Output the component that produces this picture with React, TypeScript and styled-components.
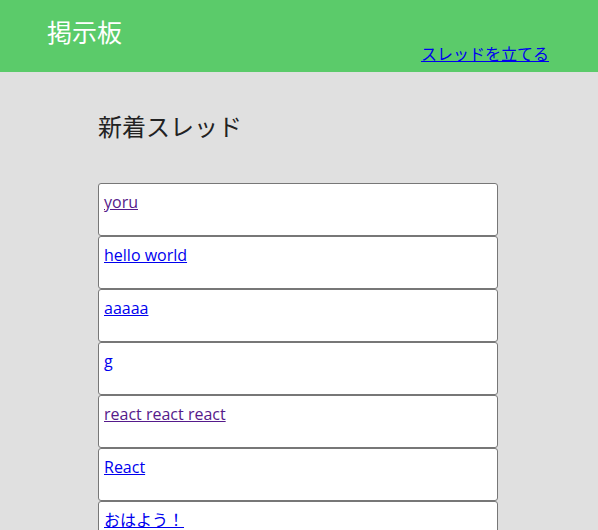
import React from 'react';
import styled, { createGlobalStyle } from 'styled-components';

const GlobalStyle = createGlobalStyle`
  html, body {
    margin: 0;
    padding: 0;
    background-color: #e0e0e0;
    font-family: "Open Sans", "Noto Sans CJK JP", sans-serif;
  }
  a { color: #0000ee; }
  a.visited { color: #551a8b; }
`;

const threads = [
  { id: 1, title: 'yoru', visited: true },
  { id: 2, title: 'hello world', visited: false },
  { id: 3, title: 'aaaaa', visited: false },
  { id: 4, title: 'g', visited: false },
  { id: 5, title: 'react react react', visited: true },
  { id: 6, title: 'React', visited: false },
  { id: 7, title: 'おはよう！', visited: false },
  { id: 8, title: 'test', visited: false },
];

const App = () => {
  return (
    <>
      <GlobalStyle />
      <Header>
        <SiteTitle>掲示板</SiteTitle>
        <NewThreadLink href="#new">スレッドを立てる</NewThreadLink>
      </Header>
      <Main>
        <Heading>新着スレッド</Heading>
        <ThreadList>
          {threads.map((t) => (
            <ThreadItem key={t.id}>
              <ThreadLink href={`#thread-${t.id}`} className={t.visited ? 'visited' : undefined}>
                {t.title}
              </ThreadLink>
            </ThreadItem>
          ))}
        </ThreadList>
      </Main>
    </>
  );
};

export default App;

const Header = styled.header`
  height: 72px;
  box-sizing: border-box;
  padding: 0 49px 0 47px;
  background-color: #5bcb6a;
  display: flex;
  justify-content: space-between;
  align-items: flex-start;
`;

const SiteTitle = styled.h1`
  margin: 0;
  padding-top: 14px;
  font-size: 25px;
  font-weight: normal;
  line-height: 36px;
  color: #ffffff;
`;

const NewThreadLink = styled.a`
  align-self: flex-end;
  margin-bottom: 6px;
  font-size: 16px;
  line-height: 23px;
`;

const Main = styled.main`
  width: 400px;
  margin: 0 auto;
  padding: 37px 2px 0 0;
`;

const Heading = styled.h2`
  margin: 0 0 39px;
  font-size: 24px;
  font-weight: normal;
  line-height: 35px;
  color: #222222;
`;

const ThreadList = styled.ul`
  list-style: none;
  margin: 0;
  padding: 0;
`;

const ThreadItem = styled.li`
  box-sizing: border-box;
  height: 53px;
  padding: 7px 5px 0;
  background-color: #ffffff;
  border: 1px solid #777777;
  border-radius: 3px;
`;

const ThreadLink = styled.a`
  font-size: 16px;
  line-height: 23px;
`;
